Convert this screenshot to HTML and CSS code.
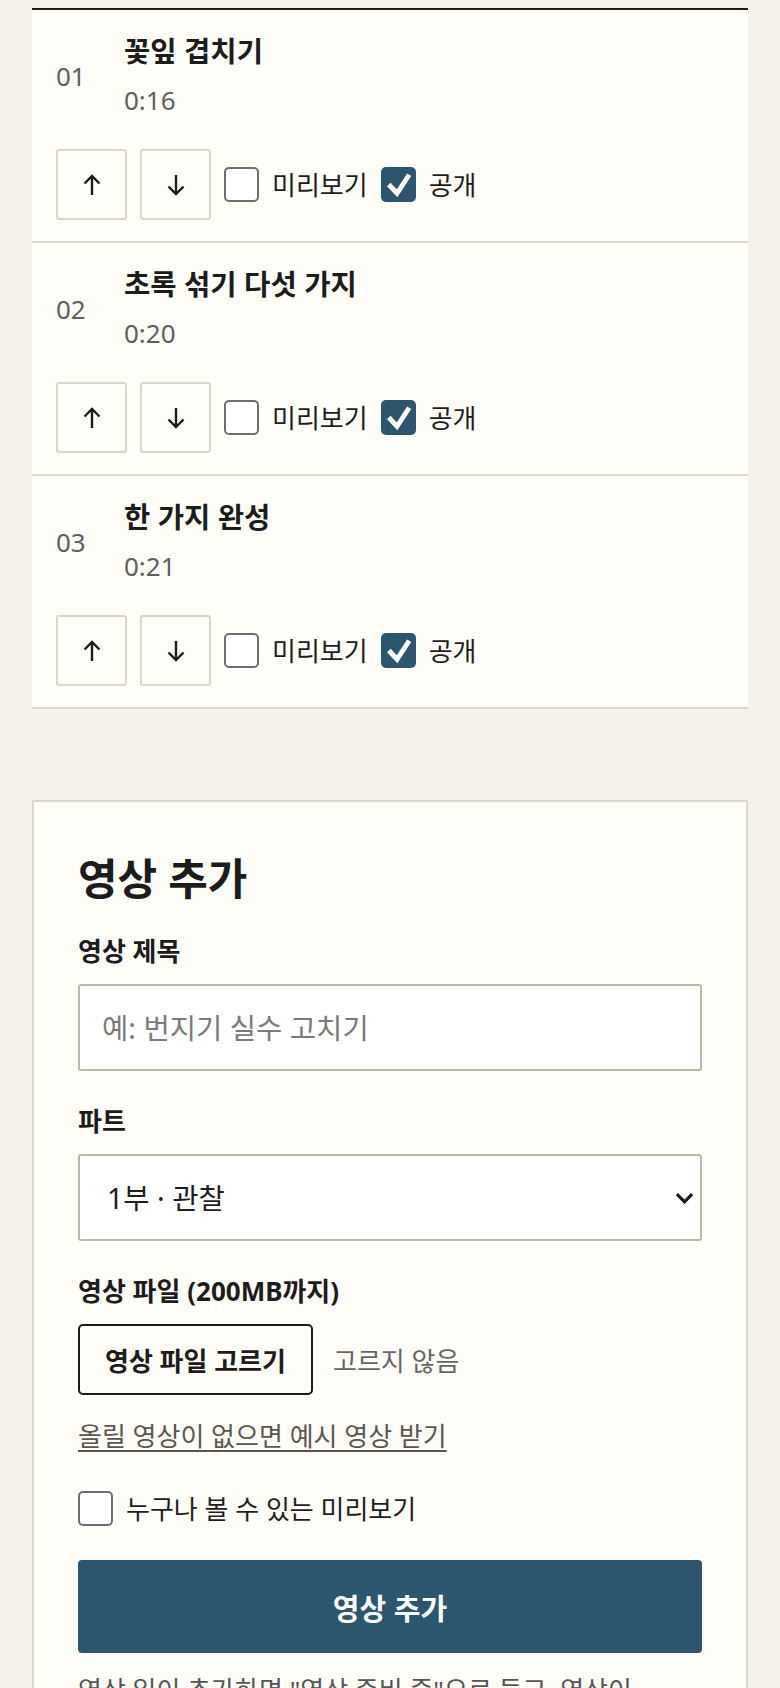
FILE: index.html
```html
<!DOCTYPE html>
<html lang="ko">
<head>
<meta charset="utf-8">
<title>영상 관리</title>
<link rel="stylesheet" href="styles.css">
</head>
<body>
<main class="page">
  <section class="list">
    <article class="item">
      <div class="item-head">
        <span class="num">01</span>
        <div class="info">
          <h3 class="title">꽃잎 겹치기</h3>
          <p class="dur">0:16</p>
        </div>
      </div>
      <div class="actions">
        <button class="move" type="button" aria-label="위로"><svg viewBox="0 0 22 24" width="22" height="24"><path d="M11 22V3M3.5 10.5L11 3l7.5 7.5" fill="none" stroke="#1c1c1c" stroke-width="2.4"/></svg></button>
        <button class="move" type="button" aria-label="아래로"><svg viewBox="0 0 22 24" width="22" height="24"><path d="M11 2v19M3.5 13.5L11 21l7.5-7.5" fill="none" stroke="#1c1c1c" stroke-width="2.4"/></svg></button>
        <label class="check"><span class="box"></span>미리보기</label>
        <label class="check"><span class="box on"><svg viewBox="0 0 36 36" width="35" height="35"><path d="M8 18l8.5 9L29 8" fill="none" stroke="#fff" stroke-width="5"/></svg></span>공개</label>
      </div>
    </article>
    <article class="item">
      <div class="item-head">
        <span class="num">02</span>
        <div class="info">
          <h3 class="title">초록 섞기 다섯 가지</h3>
          <p class="dur">0:20</p>
        </div>
      </div>
      <div class="actions">
        <button class="move" type="button" aria-label="위로"><svg viewBox="0 0 22 24" width="22" height="24"><path d="M11 22V3M3.5 10.5L11 3l7.5 7.5" fill="none" stroke="#1c1c1c" stroke-width="2.4"/></svg></button>
        <button class="move" type="button" aria-label="아래로"><svg viewBox="0 0 22 24" width="22" height="24"><path d="M11 2v19M3.5 13.5L11 21l7.5-7.5" fill="none" stroke="#1c1c1c" stroke-width="2.4"/></svg></button>
        <label class="check"><span class="box"></span>미리보기</label>
        <label class="check"><span class="box on"><svg viewBox="0 0 36 36" width="35" height="35"><path d="M8 18l8.5 9L29 8" fill="none" stroke="#fff" stroke-width="5"/></svg></span>공개</label>
      </div>
    </article>
    <article class="item">
      <div class="item-head">
        <span class="num">03</span>
        <div class="info">
          <h3 class="title">한 가지 완성</h3>
          <p class="dur">0:21</p>
        </div>
      </div>
      <div class="actions">
        <button class="move" type="button" aria-label="위로"><svg viewBox="0 0 22 24" width="22" height="24"><path d="M11 22V3M3.5 10.5L11 3l7.5 7.5" fill="none" stroke="#1c1c1c" stroke-width="2.4"/></svg></button>
        <button class="move" type="button" aria-label="아래로"><svg viewBox="0 0 22 24" width="22" height="24"><path d="M11 2v19M3.5 13.5L11 21l7.5-7.5" fill="none" stroke="#1c1c1c" stroke-width="2.4"/></svg></button>
        <label class="check"><span class="box"></span>미리보기</label>
        <label class="check"><span class="box on"><svg viewBox="0 0 36 36" width="35" height="35"><path d="M8 18l8.5 9L29 8" fill="none" stroke="#fff" stroke-width="5"/></svg></span>공개</label>
      </div>
    </article>
  </section>

  <section class="card">
    <h2 class="card-title">영상 추가</h2>
    <div class="field">
      <label class="flabel" for="t">영상 제목</label>
      <input class="text" id="t" type="text" placeholder="예: 번지기 실수 고치기">
    </div>
    <div class="field">
      <label class="flabel" for="p">파트</label>
      <div class="select-wrap">
        <select class="select" id="p">
          <option>1부 · 관찰</option>
          <option>2부 · 연습</option>
        </select>
        <svg class="chev" viewBox="0 0 20 12" width="19" height="12"><path d="M2 2l8 8 8-8" fill="none" stroke="#1c1c1c" stroke-width="3.4"/></svg>
      </div>
    </div>
    <div class="field">
      <span class="flabel">영상 파일 (200MB까지)</span>
      <div class="file-row">
        <button class="file-btn" type="button">영상 파일 고르기</button>
        <span class="file-none">고르지 않음</span>
      </div>
      <a class="sample" href="#">올릴 영상이 없으면 예시 영상 받기</a>
    </div>
    <label class="check public"><span class="box"></span>누구나 볼 수 있는 미리보기</label>
    <button class="submit" type="button">영상 추가</button>
    <p class="note">영상 일이 추가하면 "영상 준비 중"으로 들고, 영상이 처리되면 목록에 나타납니다.</p>
  </section>
</main>
</body>
</html>
```

FILE: styles.css
```css
* { box-sizing: border-box; }

html, body {
  margin: 0;
  background: #f3f1ea;
}

body {
  font-family: "Noto Sans", "Noto Sans CJK KR", sans-serif;
  color: #1e1e1e;
  font-size: 26px;
}

.page {
  padding: 8px 32px 40px;
}

.list {
  background: #fffdf8;
  border-top: 2px solid #1c1c1c;
}

.item {
  padding: 24px 24px 21px;
  border-bottom: 2px solid #dcd9cc;
}

.item-head {
  display: flex;
  align-items: center;
  gap: 24px;
}

.num {
  width: 44px;
  flex: none;
  font-size: 26px;
  line-height: 34px;
  color: #5f5f5f;
}

.info {
  display: flex;
  flex-direction: column;
}

.title {
  margin: 0;
  font-size: 28.6px;
  line-height: 34px;
  font-weight: 700;
  color: #1c1c1c;
}

.dur {
  margin: 15px 0 0;
  font-size: 26px;
  line-height: 34px;
  color: #5f5f5f;
}

.actions {
  margin-top: 32px;
  display: flex;
  align-items: center;
  gap: 13px;
}

.move {
  width: 71px;
  height: 71px;
  padding: 0;
  border: 2px solid #dad7ca;
  border-radius: 3px;
  background: #fffdf8;
  display: flex;
  align-items: center;
  justify-content: center;
}

.move svg { display: block; }

.check {
  display: inline-flex;
  align-items: center;
  gap: 13px;
  font-size: 26px;
  line-height: 34px;
  color: #1e1e1e;
}

.box {
  width: 35px;
  height: 35px;
  flex: none;
  border: 2px solid #6e6e6e;
  border-radius: 5px;
  background: #ffffff;
  display: flex;
  align-items: center;
  justify-content: center;
}

.box.on {
  border: none;
  background: #2b566d;
}

.box svg { display: block; }

.card {
  margin-top: 91px;
  background: #fffdf8;
  border: 2px solid #dcd9cc;
  padding: 53px 44px 40px;
}

.card-title {
  margin: 0 0 31px;
  font-size: 43px;
  line-height: 48px;
  font-weight: 700;
  color: #1c1c1c;
}

.field {
  display: flex;
  flex-direction: column;
  margin-bottom: 33px;
}

.flabel {
  display: block;
  font-size: 26px;
  line-height: 34px;
  font-weight: 700;
  color: #1c1c1c;
  margin-bottom: 16px;
}

.text,
.select {
  width: 100%;
  height: 87px;
  border: 2px solid #bab9a7;
  border-radius: 3px;
  background: #ffffff;
  font-family: inherit;
  font-size: 28.6px;
  color: #1e1e1e;
  padding: 0 22px;
}

.text::placeholder {
  color: #7a7a7a;
}

.select-wrap {
  position: relative;
}

.select {
  appearance: none;
  -webkit-appearance: none;
  padding-left: 27px;
}

.chev {
  position: absolute;
  right: 8px;
  top: 38px;
  pointer-events: none;
}

.file-row {
  display: flex;
  align-items: center;
  gap: 20px;
}

.file-btn {
  height: 71px;
  padding: 0 25px;
  border: 2px solid #1c1c1c;
  border-radius: 5px;
  background: #fffdf8;
  font-family: inherit;
  font-size: 26px;
  font-weight: 700;
  color: #1c1c1c;
}

.file-none {
  font-size: 26px;
  color: #666666;
}

.sample {
  margin-top: 24px;
  font-size: 26px;
  line-height: 34px;
  color: #5a5650;
  text-decoration: underline;
  text-underline-offset: 4px;
  align-self: flex-start;
}

.public {
  display: flex;
  margin-top: 38px;
}

.submit {
  display: block;
  width: 100%;
  height: 93px;
  margin-top: 34px;
  border: none;
  border-radius: 4px;
  background: #2b566d;
  color: #ffffff;
  font-family: inherit;
  font-size: 29px;
  font-weight: 700;
}

.note {
  margin: 20px 0 0;
  font-size: 26px;
  line-height: 34px;
  color: #555555;
  word-break: keep-all;
}
```
